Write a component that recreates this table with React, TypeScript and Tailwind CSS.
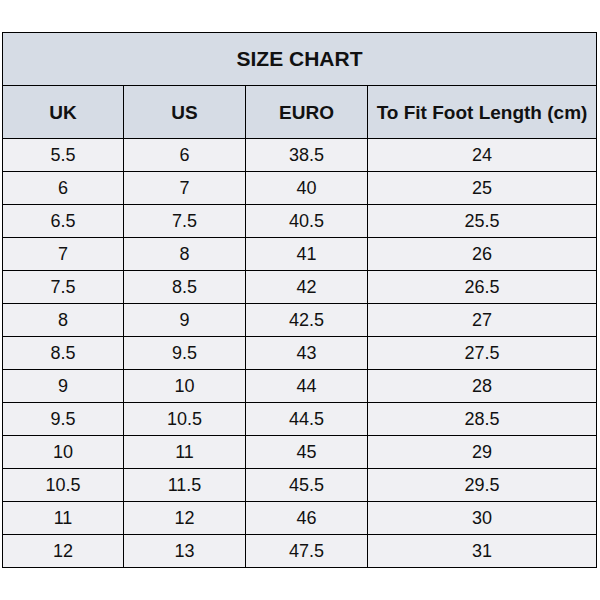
import React from "react";

const rows: [string, string, string, string][] = [
  ["5.5", "6", "38.5", "24"],
  ["6", "7", "40", "25"],
  ["6.5", "7.5", "40.5", "25.5"],
  ["7", "8", "41", "26"],
  ["7.5", "8.5", "42", "26.5"],
  ["8", "9", "42.5", "27"],
  ["8.5", "9.5", "43", "27.5"],
  ["9", "10", "44", "28"],
  ["9.5", "10.5", "44.5", "28.5"],
  ["10", "11", "45", "29"],
  ["10.5", "11.5", "45.5", "29.5"],
  ["11", "12", "46", "30"],
  ["12", "13", "47.5", "31"],
];

const headers = ["UK", "US", "EURO", "To Fit Foot Length (cm)"];

const App = () => {
  return (
    <div className="w-[600px] h-[600px] bg-white pt-[32px] pl-[2px] font-['Liberation_Sans',Arial,sans-serif] text-[#111]">
      <table className="w-[594px] table-fixed border-collapse border-[1.5px] border-black">
        <colgroup>
          <col className="w-[121px]" />
          <col className="w-[122px]" />
          <col className="w-[122px]" />
          <col className="w-[229px]" />
        </colgroup>
        <thead>
          <tr className="h-[53px] bg-[#d6dce5]">
            <th
              colSpan={4}
              className="border-[1.5px] border-black text-[21px] font-bold text-center"
            >
              SIZE CHART
            </th>
          </tr>
          <tr className="h-[53px] bg-[#d6dce5]">
            {headers.map((h, idx) => (
              <th
                key={idx}
                className="border-[1.5px] border-black text-[19px] font-bold text-center pt-[2px]"
              >
                {h}
              </th>
            ))}
          </tr>
        </thead>
        <tbody>
          {rows.map((r, idx) => (
            <tr key={idx} className="h-[33px] bg-[#f0f0f3]">
              {r.map((c, j) => (
                <td
                  key={j}
                  className="border-[1.5px] border-black text-[18px] text-center leading-none"
                >
                  {c}
                </td>
              ))}
            </tr>
          ))}
        </tbody>
      </table>
    </div>
  );
};

export default App;
